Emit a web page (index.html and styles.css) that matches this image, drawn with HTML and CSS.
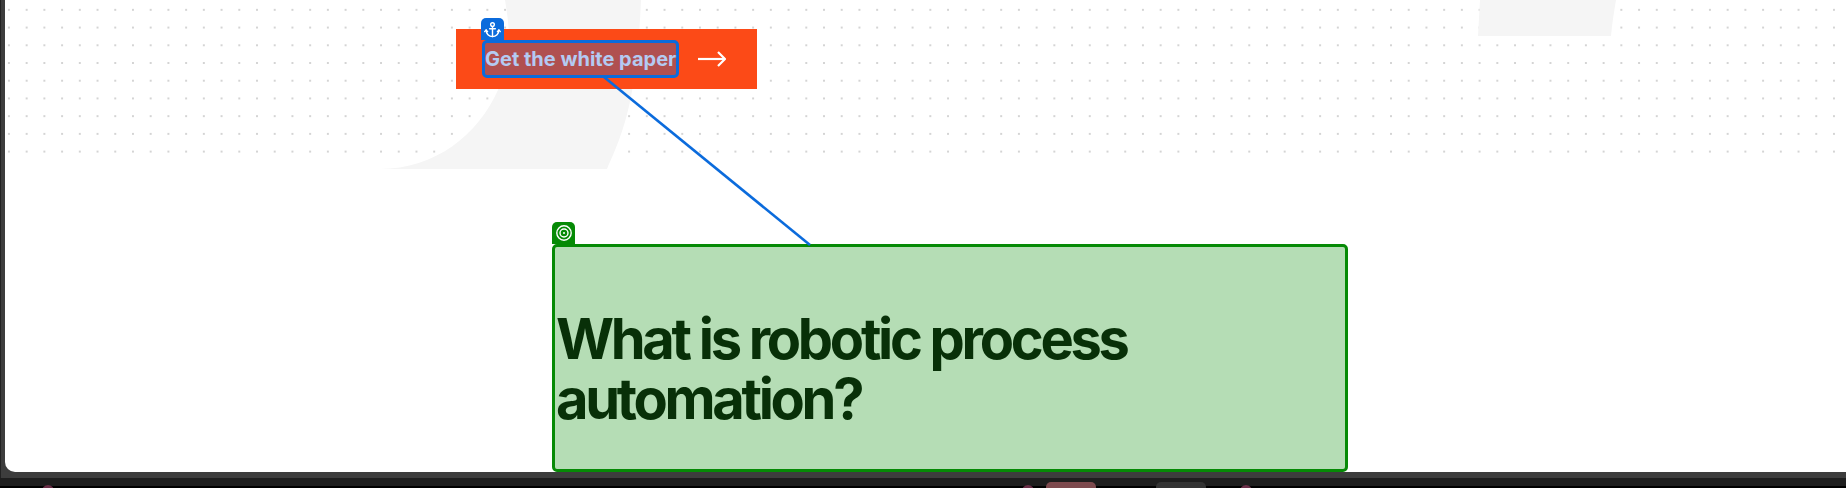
FILE: index.html
```html
<!DOCTYPE html>
<html lang="en">
<head>
    <meta charset="UTF-8">
    <meta name="viewport" content="width=device-width, initial-scale=1.0">
    <title>What is robotic process automation?</title>
    <link rel="stylesheet" href="styles.css">
</head>
<body>
    <div class="chrome">
        <div class="page">
            <div class="hero">
                <a class="cta">
                    <span class="source">
                        <span class="tab tab-source">
                            <svg width="17" height="17" viewBox="0 0 24 24" fill="none" stroke="#fff" stroke-width="2" stroke-linecap="round" stroke-linejoin="round">
                                <circle cx="12" cy="5" r="2.6"/>
                                <path d="M12 8v14"/>
                                <path d="M8 11h8"/>
                                <path d="M3 13c0 5 4 9 9 9s9-4 9-9"/>
                                <path d="M1 15l2-2.500 2 2.500"/>
                                <path d="M19 15l2-2.500 2 2.500"/>
                            </svg>
                        </span>
                        Get the white paper
                    </span>
                    <svg class="arrow" width="28" height="16" viewBox="0 0 28 16" fill="none" stroke="#fff" stroke-width="2.200">
                        <path d="M0 8h27"/>
                        <path d="M20 1l7 7-7 7"/>
                    </svg>
                </a>
            </div>

            <div class="target">
                <span class="tab tab-target">
                    <svg width="18" height="18" viewBox="0 0 18 18" fill="none" stroke="#fff" stroke-width="1.400">
                        <circle cx="9" cy="9" r="7.200"/>
                        <circle cx="9" cy="9" r="4"/>
                        <circle cx="9" cy="9" r="1" fill="#fff" stroke="none"/>
                    </svg>
                </span>
                <h1>What is robotic process automation?</h1>
            </div>

            <!-- big quote marks over the dots, coordinates are window pixels -->
            <svg class="quotes" width="1846" height="170" viewBox="0 0 1846 170">
                <path d="M505 0C510 30 512 50 498 90C478 135 435 169 380 169L607 169C625 130 637 95 641 0Z"/>
                <path d="M1480 0L1478 36L1611 36C1612 24 1614 12 1616 0Z"/>
            </svg>

            <svg class="link" width="1846" height="472" viewBox="0 0 1846 472">
                <path d="M604 77L810 245"/>
            </svg>
        </div>
    </div>
    <div class="taskbar">
        <span class="task task-dot task-left"></span>
        <span class="task task-dot task-mid"></span>
        <span class="task task-red"></span>
        <span class="task task-dark"></span>
        <span class="task task-dot task-end"></span>
    </div>
</body>
</html>
```

FILE: styles.css
```css
body {
    margin: 0;
    height: 488px;
    overflow: hidden;
    background-color: #000;
    font-family: Inter, "Liberation Sans", sans-serif;
}
.chrome {
    height: 478px;
    box-sizing: border-box;
    padding: 0 0 6px 5px;
    background-color: #3d3d3d;
    border-left: 1px solid #222;
}
.page {
    position: relative;
    height: 472px;
    margin-left: -1px;
    background-color: #fff;
    border-bottom-left-radius: 10px;
    overflow: hidden;
}
.hero {
    position: relative;
    height: 160px;
    box-sizing: border-box;
    padding: 29px 0 0 451px;
    background-image: radial-gradient(circle at 4px 10px, #d4d4d4 1px, transparent 1.2px);
    background-size: 17.72px 17.72px;
}
.cta {
    position: relative;
    z-index: 1;
    display: flex;
    align-items: center;
    width: 301px;
    height: 60px;
    box-sizing: border-box;
    padding-left: 26px;
    background-color: #fc4a17;
}
.source {
    position: relative;
    display: block;
    height: 38px;
    width: 197px;
    box-sizing: border-box;
    padding-left: 0;
    border: 3px solid #0b6bdc;
    border-radius: 5px;
    background-color: #b05050;
    color: #b4caf2;
    font-size: 20px;
    font-weight: 700;
    line-height: 32px;
    white-space: nowrap;
}
.arrow {
    margin-left: 19px;
}
.tab {
    position: absolute;
    display: flex;
    align-items: center;
    justify-content: center;
    width: 23px;
    height: 22px;
    border-radius: 5px 5px 0 0;
}
.tab-source {
    top: -25px;
    left: -4px;
    background-color: #0b6bdc;
}
.target {
    position: relative;
    z-index: 1;
    width: 796px;
    height: 228px;
    box-sizing: border-box;
    margin: 84px 0 0 547px;
    padding: 62px 0 0 1px;
    border: 3px solid #068a06;
    border-radius: 5px;
    background-color: #b5ddb5;
}
.tab-target {
    top: -25px;
    left: -3px;
    background-color: #068a06;
}
.target h1 {
    margin: 0;
    width: 620px;
    color: #083008;
    font-size: 56px;
    font-weight: 650;
    line-height: 60px;
    letter-spacing: -3.300px;
}
.quotes {
    position: absolute;
    top: 0;
    left: -5px;
    fill: #f5f5f5;
}
.link {
    position: absolute;
    top: 0;
    left: -5px;
    z-index: 2;
    fill: none;
    stroke: #0b6bdc;
    stroke-width: 2.600;
}
.taskbar {
    display: flex;
    height: 10px;
    box-sizing: border-box;
    background: linear-gradient(#1e1e1e 8px, #000 8px);
    overflow: hidden;
}
.task {
    display: block;
    margin-top: 4px;
}
.task-dot {
    width: 12px;
    height: 12px;
    margin-top: 7px;
    border-radius: 50%;
    background-color: #6a2f48;
}
.task-left {
    margin-left: 42px;
}
.task-mid {
    margin-left: 968px;
}
.task-red {
    width: 50px;
    height: 12px;
    margin-left: 12px;
    border-radius: 5px 5px 0 0;
    background-color: #7d4a4e;
}
.task-dark {
    width: 50px;
    height: 12px;
    margin-left: 60px;
    border-radius: 5px 5px 0 0;
    background-color: #333;
}
.task-end {
    margin-left: 34px;
}
```
